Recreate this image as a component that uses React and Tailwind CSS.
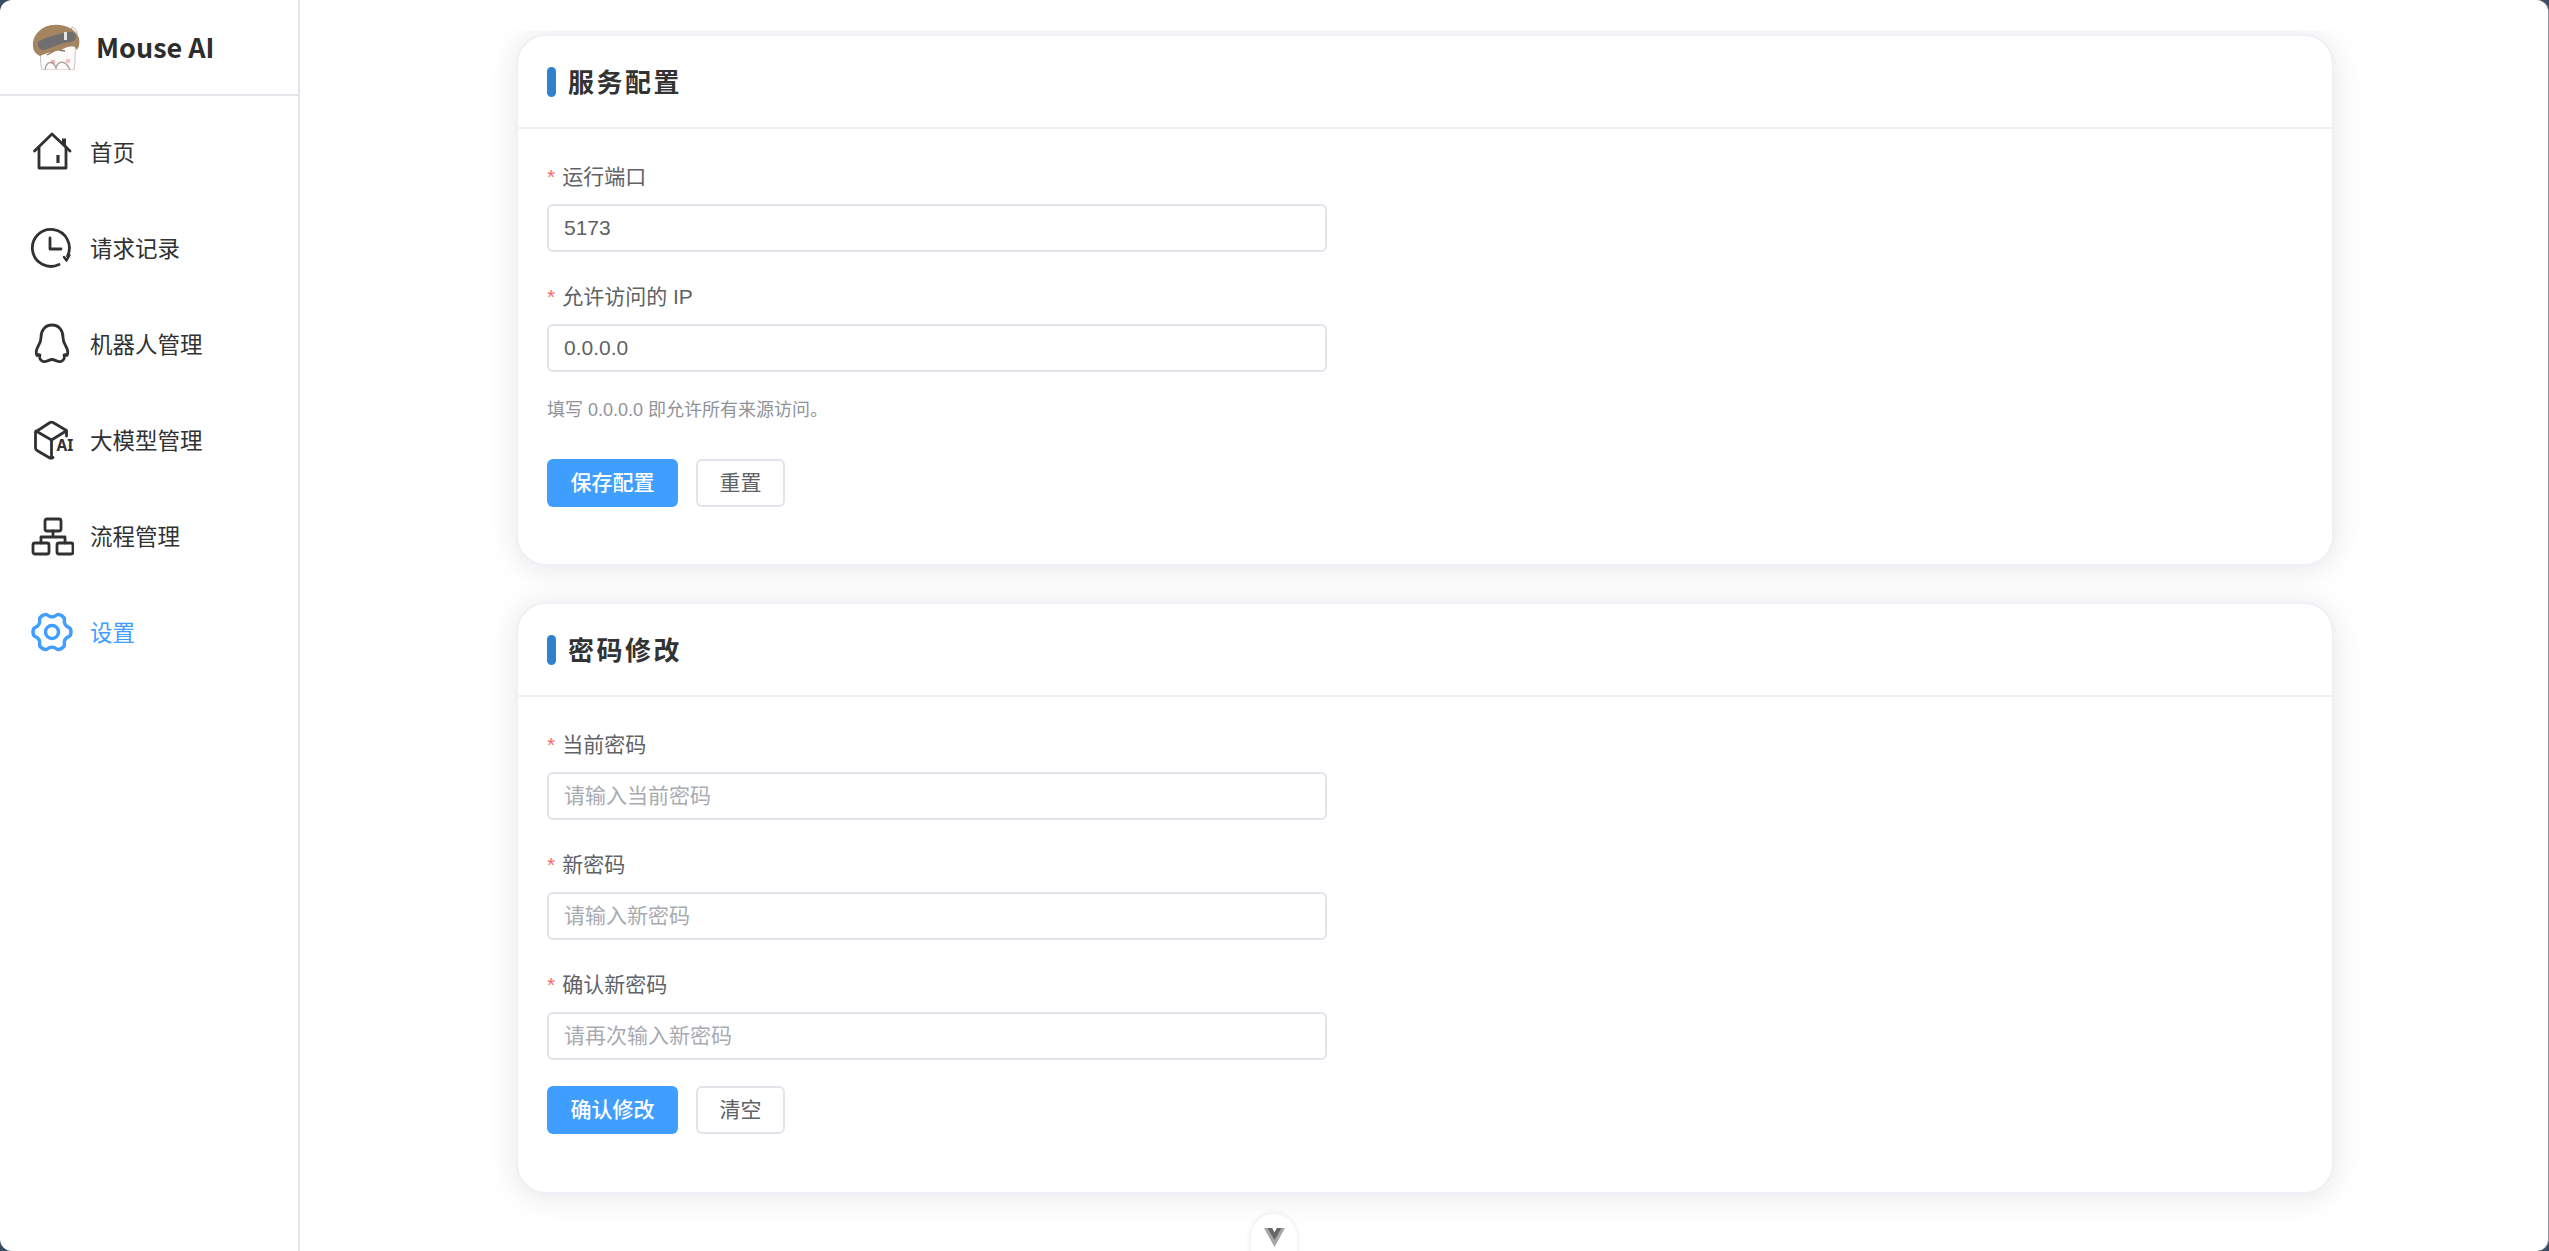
import { useState } from "react";

const navItems = [
  { key: "home", label: "首页" },
  { key: "history", label: "请求记录" },
  { key: "bot", label: "机器人管理" },
  { key: "model", label: "大模型管理" },
  { key: "flow", label: "流程管理" },
  { key: "settings", label: "设置" },
];

// six rounded teeth, one of them pointing right
const gearPath = () => {
  const pt = (deg, r) => {
    const a = (deg * Math.PI) / 180;
    return `${(22 + r * Math.cos(a)).toFixed(2)} ${(22 + r * Math.sin(a)).toFixed(2)}`;
  };
  let d = `M${pt(-12, 18.5)}`;
  for (let k = 0; k < 6; k++) {
    const a = k * 60;
    d += ` Q${pt(a, 20)} ${pt(a + 12, 18.5)}`;
    d += ` L${pt(a + 21, 15.8)} Q${pt(a + 30, 14.6)} ${pt(a + 39, 15.8)} L${pt(a + 48, 18.5)}`;
  }
  return d + " Z";
};

const NavIcon = ({ name }) => {
  const common = {
    width: 44,
    height: 44,
    viewBox: "0 0 44 44",
    fill: "none",
    stroke: "currentColor",
    strokeWidth: 2.8,
    strokeLinecap: "round",
    strokeLinejoin: "round",
    className: "shrink-0",
  };
  if (name === "home") {
    return (
      <svg {...common}>
        <path d="M4.5 21 L22 4 L40 21" />
        <path d="M34 8.5 V15" strokeWidth="4" strokeLinecap="butt" />
        <path d="M9 17 V38 H36 V17" />
        <path d="M28 25 V33" strokeWidth="3.2" strokeLinecap="butt" />
      </svg>
    );
  }
  if (name === "history") {
    return (
      <svg {...common}>
        <path d="M37.5 30 A18.5 18.5 0 1 0 29 38.5" />
        <path d="M20 12 V23 H31" />
        <path d="M34 31 L36.5 34.5 L39.5 29" strokeWidth="2.4" />
      </svg>
    );
  }
  if (name === "bot") {
    return (
      <svg {...common}>
        <path d="M22 3 C15 3 11 8.5 11 15.5 C11 19 10 21 8.5 23.5 C6.5 27 5.5 31 7 33.5 C8 32.5 9.5 32.5 10 33 C9 35 9.5 38 13 39.5 C16 40.5 19 37.5 22 37.5 C25 37.5 28 40.5 31 39.5 C34.5 38 35 35 34 33 C34.5 32.5 36 32.5 37 33.5 C38.5 31 37.5 27 35.5 23.5 C34 21 33 19 33 15.5 C33 8.5 29 3 22 3 Z" />
      </svg>
    );
  }
  if (name === "model") {
    return (
      <svg {...common}>
        <path d="M23 39.5 C21.5 40.5 20.5 40.5 19 39.5 L7 32.5 C6 32 5.5 31 5.5 30 V14 L20 4.5 C21 4 22 4 23 4.5 L36.5 12.5 V18" />
        <path d="M6 13 L21.5 22 L36 13" />
        <path d="M21.5 22 V39" />
        <text x="26.5" y="32.5" fontSize="15.5" fontWeight="700" fill="currentColor" stroke="none" fontFamily="'Noto Sans', sans-serif">AI</text>
      </svg>
    );
  }
  if (name === "flow") {
    return (
      <svg {...common}>
        <rect x="15" y="5" width="16" height="12" rx="2" />
        <rect x="3" y="29" width="16" height="11" rx="2" />
        <rect x="27" y="29" width="16" height="11" rx="2" />
        <path d="M23 17 V23 M11 29 V23 H35 V29" />
      </svg>
    );
  }
  return (
    <svg {...common} strokeWidth="3.4">
      <circle cx="22" cy="22" r="6.5" />
      <path d={gearPath()} />
    </svg>
  );
};

const Logo = () => (
  <svg width="50" height="46" viewBox="0 0 50 46" className="shrink-0">
    <path d="M8 24 C9 33 8 40 10 46 H42 C44 38 42 30 44 22 Z" fill="#fdfbfa" stroke="#c4c0bc" strokeWidth="1" />
    <path d="M40 3 C44 4 46 8 45 13 L38 8 Z" fill="#f4f1ee" stroke="#bdb8b3" strokeWidth="1" />
    <path d="M1 22 C0 11 10 1 22 1 C33 0 43 5 47 14 C48 19 47 23 45 26 C42 20 38 22 31 25 C24 28 15 28 8 32 C4 30 1 27 1 22 Z" fill="#a5855f" />
    <path d="M6 18 C14 13 26 10 36 8 C41 7 44 10 44 13 C44 17 39 18 32 19 C24 21 17 25 11 26 C7 26 5 22 6 18 Z" fill="#6f6f6f" />
    <rect x="32" y="8" width="3" height="8" fill="#e6e6e6" />
    <path d="M15 31 L22 27 M27 26 L33 27" stroke="#8b6f62" strokeWidth="1.3" fill="none" />
    <circle cx="21" cy="38" r="2.3" fill="#f7a8a8" />
    <circle cx="36" cy="37" r="2.3" fill="#f7c0c0" />
    <path d="M13 46 C14 37 21 36 24 44 C26 36 34 36 38 46" fill="none" stroke="#aaa5a1" strokeWidth="1.4" />
  </svg>
);

const Field = ({ label, value, placeholder }) => (
  <div>
    <label className="flex items-center h-[48px] text-[21px] text-[#606266]">
      <span className="text-[#f56c6c] mr-[7px]">*</span>
      {label}
    </label>
    <input
      defaultValue={value}
      placeholder={placeholder}
      className="block w-[780px] h-[48px] px-[15px] mt-[3px] text-[21px] text-[#606266] placeholder:text-[#a8abb2] bg-white border-2 border-[#e2e4ec] rounded-[6px] outline-none"
    />
  </div>
);

const Card = ({ title, children }) => (
  <section className="bg-white rounded-[30px] border-2 border-[#eef0f6] shadow-[0_3px_30px_rgba(0,0,0,0.1)]">
    <header className="flex items-center h-[93px] pl-[29px] border-b-2 border-[#eef0f6]">
      <span className="w-[9px] h-[30px] rounded-full bg-[#3182ce] mr-[12px]" />
      <h2 className="pt-[3px] text-[26px] font-bold tracking-[2.5px] text-[#333333]">{title}</h2>
    </header>
    <div className="px-[29px]">{children}</div>
  </section>
);

const Buttons = ({ primary, secondary }) => (
  <div className="flex gap-[18px]">
    <button className="w-[131px] h-[48px] rounded-[6px] bg-[#409eff] text-white text-[21px] font-medium">{primary}</button>
    <button className="w-[89px] h-[48px] rounded-[6px] bg-white border-2 border-[#e2e4ec] text-[#606266] text-[21px]">{secondary}</button>
  </div>
);

export default function App() {
  const [active] = useState("settings");

  return (
    <div className="h-[1251px] w-full bg-[#3b4b61] overflow-hidden">
      <div className="relative flex h-full bg-white rounded-[12px] overflow-hidden border-r border-[#8a94a3] font-['Liberation_Sans','Noto_Sans_CJK_SC',sans-serif]">
        <aside className="w-[300px] shrink-0 border-r-2 border-[#e4e5ec] font-['Noto_Sans_CJK_SC',sans-serif]">
          <div className="flex items-center h-[96px] pl-[32px] gap-[14px] border-b-2 border-[#e4e5ec]">
            <Logo />
            <span className="text-[27px] font-semibold text-[#2d2d2d]">Mouse AI</span>
          </div>
          <nav className="pt-[8px]">
            {navItems.map((item) => (
              <div
                key={item.key}
                className={`flex items-center h-[96px] pl-[30px] gap-[16px] text-[22.5px] ${active === item.key ? "text-[#409eff]" : "text-[#303133]"}`}
              >
                <NavIcon name={item.key} />
                <span>{item.label}</span>
              </div>
            ))}
          </nav>
        </aside>

        <main className="flex-1 min-w-0 flex flex-col mt-[30px] overflow-hidden">
          <div className="flex flex-col gap-[36px] w-[1818px] ml-[216px] pt-[4px]">
            <Card title="服务配置">
              <div className="pt-[24px] flex flex-col gap-[21px]">
                <Field label="运行端口" value="5173" />
                <div>
                  <Field label="允许访问的 IP" value="0.0.0.0" />
                  <p className="text-[18px] text-[#909399] mt-[26px] leading-[24px]">填写 0.0.0.0 即允许所有来源访问。</p>
                </div>
              </div>
              <div className="mt-[37px] pb-[57px]">
                <Buttons primary="保存配置" secondary="重置" />
              </div>
            </Card>
            <Card title="密码修改">
              <div className="pt-[24px] flex flex-col gap-[21px]">
                <Field label="当前密码" placeholder="请输入当前密码" />
                <Field label="新密码" placeholder="请输入新密码" />
                <Field label="确认新密码" placeholder="请再次输入新密码" />
              </div>
              <div className="mt-[26px] pb-[58px]">
                <Buttons primary="确认修改" secondary="清空" />
              </div>
            </Card>
          </div>
        </main>

        <div className="absolute left-[1251px] top-[1214px] w-[46px] h-[60px] rounded-full bg-white shadow-[0_0_6px_rgba(0,0,0,0.1)] flex justify-center pt-[14px]">
          <svg width="21" height="19" viewBox="0 0 21 19">
            <path d="M0 0 H8 L10.5 4.5 L13 0 H21 L10.5 19 Z" fill="#a6a6a6" />
            <path d="M3.5 0 H8 L10.5 4.5 L13 0 H17.5 L10.5 12 Z" fill="#666666" />
          </svg>
        </div>
      </div>
    </div>
  );
}
